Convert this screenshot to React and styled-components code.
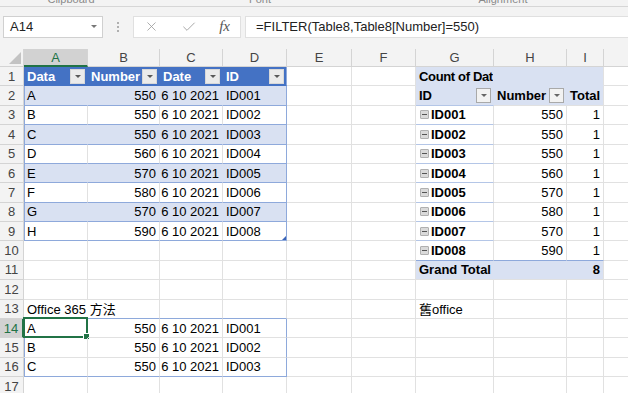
import React from 'react'
import styled, {createGlobalStyle} from 'styled-components'
import {X, Check} from 'lucide-react'

const BLUE = '#4472c4'
const BAND = '#d9e1f2'
const LINE = '#8ea9db'
const PLINE = '#b4c6e7'
const GRID = '#e1e1e1'
const GREEN = '#217346'

const GlobalStyle = createGlobalStyle`
  html, body { margin: 0; padding: 0; background: #fff; overflow: hidden; }
  body { font-family: "Liberation Sans", Arial, "Noto Sans CJK TC", sans-serif; }
`

const Page = styled.div`
  width: 628px;
  height: 393px;
  overflow: hidden;
  background: #fff;
`

// ribbon (cut off, only the group captions peek in)
const Ribbon = styled.div`
  display: flex;
  height: 6px;
  overflow: hidden;
  background: #f3f3f3;
  border-bottom: 1px solid #d6d6d6;
  box-shadow: 0 1px 2px rgba(0,0,0,0.08);
`

const Group = styled.div`
  width: ${p => p.$w}px;
  flex-shrink: 0;
  text-align: center;
  font-size: 11px;
  line-height: 11px;
  margin-top: -6px;
  color: #8a8a8a;
`

const FormulaArea = styled.div`
  display: flex;
  align-items: center;
  height: 42px;
  padding: 0 0 3px 3px;
  box-sizing: border-box;
  background: #f3f3f3;
`

const NameBox = styled.div`
  display: flex;
  align-items: center;
  justify-content: space-between;
  width: 100px;
  height: 22px;
  box-sizing: border-box;
  padding: 0 5px 0 6px;
  background: #fff;
  border: 1px solid #d0d0d0;
  font-size: 13px;
  color: #222;
`

const SmallArrow = styled.span`
  width: 0;
  height: 0;
  border-left: 3px solid transparent;
  border-right: 3px solid transparent;
  border-top: 3px solid ${p => p.$c || '#777'};
`

const Dots = styled.div`
  display: flex;
  flex-direction: column;
  gap: 2px;
  margin: 0 14px 0 14px;
  span { width: 2px; height: 2px; background: #b0b0b0; display: block; }
`

const IconBox = styled.div`
  display: flex;
  align-items: center;
  justify-content: space-between;
  width: 108px;
  height: 22px;
  box-sizing: border-box;
  padding: 0 10px;
  background: #fff;
  border: 1px solid #e0e0e0;
  color: #9a9a9a;
`

const Fx = styled.span`
  font-family: "Liberation Serif", serif;
  font-style: italic;
  font-size: 15px;
  color: #555;
`

const FormulaInput = styled.div`
  flex: 1;
  display: flex;
  align-items: center;
  height: 22px;
  box-sizing: border-box;
  margin-left: 4px;
  padding-left: 10px;
  background: #fff;
  border: 1px solid #e0e0e0;
  border-right: none;
  font-size: 13px;
  color: #222;
`

const Sheet = styled.div`
  display: grid;
  grid-template-columns: 24px 64px 72px 63px 64px 65px 64px 78px 73px 37px 64px;
  grid-template-rows: 18px repeat(17, 19.38px);
  background: #fff;
`

const Corner = styled.div`
  position: relative;
  background: #f3f3f3;
  border-right: 1px solid #d4d4d4;
  border-bottom: 1px solid #d4d4d4;
  &::after {
    content: '';
    position: absolute;
    right: 2px;
    bottom: 2px;
    border-left: 12px solid transparent;
    border-bottom: 12px solid #c3c3c3;
  }
`

const ColHead = styled.div`
  display: flex;
  align-items: center;
  justify-content: center;
  font-size: 13px;
  color: ${p => p.$sel ? GREEN : '#444'};
  background: ${p => p.$sel ? '#d2d2d2' : '#f3f3f3'};
  border-right: 1px solid #d4d4d4;
  border-bottom: ${p => p.$sel ? `2px solid ${GREEN}` : '1px solid #d4d4d4'};
`

const RowHead = styled.div`
  display: flex;
  align-items: center;
  justify-content: center;
  font-size: 13px;
  color: ${p => p.$sel ? GREEN : '#444'};
  background: ${p => p.$sel ? '#d2d2d2' : '#f3f3f3'};
  border-right: ${p => p.$sel ? `2px solid ${GREEN}` : '1px solid #d4d4d4'};
  border-bottom: 1px solid #d4d4d4;
`

const Cell = styled.div`
  position: relative;
  display: flex;
  align-items: center;
  justify-content: ${p => p.$right ? 'flex-end' : 'flex-start'};
  padding: 0 3px;
  min-width: 0;
  white-space: nowrap;
  overflow: ${p => p.$clip ? 'hidden' : 'visible'};
  font-size: 13px;
  font-weight: ${p => p.$bold ? 700 : 400};
  letter-spacing: ${p => p.$clip ? '-0.35px' : 'normal'};
  color: ${p => p.$color || '#000'};
  background: ${p => p.$bg || 'transparent'};
  border-right: 1px solid ${p => p.$rb || GRID};
  border-bottom: 1px solid ${p => p.$bb || GRID};
  box-shadow: ${p => p.$lb ? `inset 1px 0 ${p.$lb}` : 'none'};
`

const TableFilter = styled.span`
  position: absolute;
  right: 2px;
  top: 2px;
  width: 15px;
  height: 15px;
  display: flex;
  align-items: center;
  justify-content: center;
  background: #ebebeb;
  border: 1px solid #d8d8d8;
  box-sizing: border-box;
`

const PivotFilter = styled(TableFilter)`
  background: #f2f2f2;
  border-color: #a9a9a9;
`

const Minus = styled.span`
  display: inline-flex;
  align-items: center;
  justify-content: center;
  width: 9px;
  height: 9px;
  margin: 0 2px 0 1px;
  box-sizing: border-box;
  background: #dadada;
  border: 1px solid #b0b0b0;
  border-radius: 1px;
  &::after { content: ''; width: 5px; height: 1px; background: #555; }
`

const ResizeHandle = styled.span`
  position: absolute;
  right: 0;
  bottom: 0;
  border-left: 4px solid transparent;
  border-bottom: 4px solid #3a64b8;
`

const Selection = styled.span`
  position: absolute;
  left: -1px;
  top: -2px;
  right: -1px;
  bottom: -1px;
  border: 2px solid ${GREEN};
  pointer-events: none;
  &::after {
    content: '';
    position: absolute;
    right: -4px;
    bottom: -4px;
    width: 5px;
    height: 5px;
    background: ${GREEN};
    border: 1px solid #fff;
  }
`

const COLS = ['A', 'B', 'C', 'D', 'E', 'F', 'G', 'H', 'I', 'J']

const buildSheet = () => {
  const s = Array.from({length: 17}, () => Array.from({length: 10}, () => ({})))

  // Table8 header
  ;['Data', 'Number', 'Date', 'ID'].forEach((t, c) => {
    s[0][c] = {text: t, bold: true, bg: BLUE, color: '#fff', filter: 'table', rb: c === 3 ? LINE : BLUE, bb: BLUE, lb: c === 0 ? BLUE : null}
  })

  const nums = [550, 550, 550, 560, 570, 580, 570, 590]
  nums.forEach((n, i) => {
    const band = i % 2 === 0
    const bg = band ? BAND : null
    const rb = band ? BAND : GRID
    const id = 'ID00' + (i + 1)
    s[i + 1][0] = {text: String.fromCharCode(65 + i), bg, rb, bb: LINE, lb: LINE}
    s[i + 1][1] = {text: n, right: true, bg, rb, bb: LINE}
    s[i + 1][2] = {text: '6 10 2021', right: true, bg, rb, bb: LINE}
    s[i + 1][3] = {text: id, bg, rb: LINE, bb: LINE, handle: i === 7}

    // pivot rows
    const last = i === 7
    s[i + 2][6] = {text: id, bold: true, minus: true, bb: last ? LINE : PLINE}
    s[i + 2][7] = {text: n, right: true, bb: last ? LINE : GRID}
    s[i + 2][8] = {text: '1', right: true, bb: last ? LINE : GRID}
  })

  // pivot header
  s[0][6] = {text: 'Count of Dat', bold: true, bg: BAND, rb: BAND, bb: BAND, clip: true}
  s[0][7] = {bg: BAND, rb: BAND, bb: BAND}
  s[0][8] = {bg: BAND, bb: BAND}
  s[1][6] = {text: 'ID', bold: true, bg: BAND, rb: BAND, bb: PLINE, filter: 'pivot'}
  s[1][7] = {text: 'Number', bold: true, bg: BAND, rb: BAND, filter: 'pivot'}
  s[1][8] = {text: 'Total', bold: true, bg: BAND}
  s[10][6] = {text: 'Grand Total', bold: true, bg: BAND, rb: BAND}
  s[10][7] = {bg: BAND, rb: BAND}
  s[10][8] = {text: '8', bold: true, right: true, bg: BAND}

  // row 13 captions + spill range
  s[12][0] = {text: 'Office 365 方法', rb: 'transparent', bb: LINE}
  s[12][1] = {bb: LINE}
  s[12][2] = {bb: LINE}
  s[12][3] = {bb: LINE}
  s[12][6] = {text: '舊office'}
  ;[550, 550, 550].forEach((n, i) => {
    const bb = i === 2 ? LINE : GRID
    s[13 + i][0] = {text: String.fromCharCode(65 + i), lb: LINE, bb, sel: i === 0}
    s[13 + i][1] = {text: n, right: true, bb}
    s[13 + i][2] = {text: '6 10 2021', right: true, bb}
    s[13 + i][3] = {text: 'ID00' + (i + 1), rb: LINE, bb}
  })
  return s
}

const sheet = buildSheet()

const renderCell = (cell, key) => (
  <Cell key={key} $right={cell.right} $bold={cell.bold} $bg={cell.bg} $color={cell.color}
    $rb={cell.rb} $bb={cell.bb} $lb={cell.lb} $clip={cell.clip}>
    {cell.minus && <Minus />}
    {cell.text}
    {cell.filter === 'table' && <TableFilter><SmallArrow $c="#595959" /></TableFilter>}
    {cell.filter === 'pivot' && <PivotFilter><SmallArrow $c="#666" /></PivotFilter>}
    {cell.handle && <ResizeHandle />}
    {cell.sel && <Selection />}
  </Cell>
)

const App = () => {
  return (
    <Page>
      <GlobalStyle />
      <Ribbon>
        <Group $w={142}>Clipboard</Group>
        <Group $w={236}>Font</Group>
        <Group $w={250}>Alignment</Group>
      </Ribbon>

      <FormulaArea>
        <NameBox>A14<SmallArrow /></NameBox>
        <Dots><span /><span /><span /></Dots>
        <IconBox>
          <X size={15} strokeWidth={1.3} />
          <Check size={16} strokeWidth={1.3} />
          <Fx>fx</Fx>
        </IconBox>
        <FormulaInput>=FILTER(Table8,Table8[Number]=550)</FormulaInput>
      </FormulaArea>

      <Sheet>
        <Corner />
        {COLS.map(c => <ColHead key={c} $sel={c === 'A'}>{c}</ColHead>)}
        {sheet.map((row, r) => (
          <React.Fragment key={r}>
            <RowHead $sel={r === 13}>{r + 1}</RowHead>
            {row.map((cell, c) => renderCell(cell, c))}
          </React.Fragment>
        ))}
      </Sheet>
    </Page>
  )
}

export default App
